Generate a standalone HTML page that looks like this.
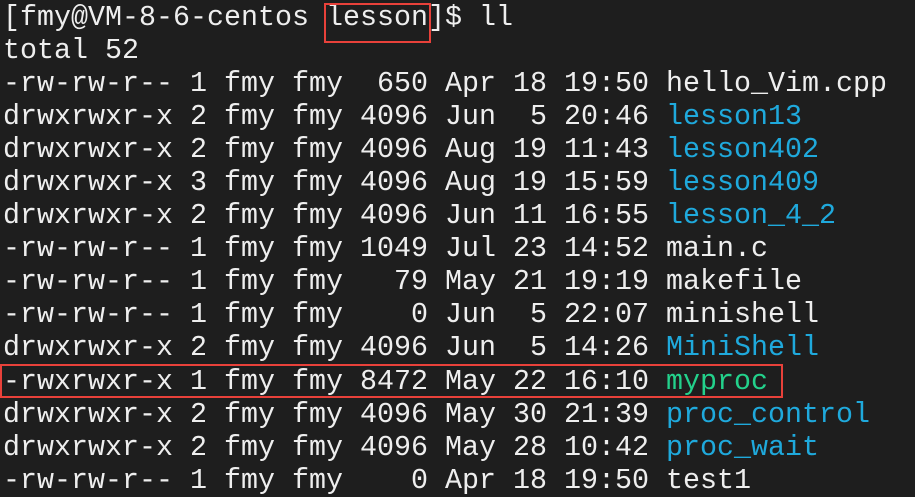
<!DOCTYPE html>
<html><head><meta charset="utf-8"><style>
html,body{margin:0;padding:0;background:#1e1e1e;width:915px;height:497px;overflow:hidden}
pre{margin:0;position:absolute;left:3px;top:1px;font-family:"Liberation Mono","DejaVu Sans Mono",monospace;font-size:28.33px;line-height:33.05px;color:#eeeeee}
.b{color:#1fa9dc}.g{color:#23d18b}
.box{position:absolute;border:2px solid #e8413a;box-sizing:border-box}
</style></head><body>
<pre>[fmy@VM-8-6-centos lesson]$ ll
total 52
-rw-rw-r-- 1 fmy fmy  650 Apr 18 19:50 hello_Vim.cpp
drwxrwxr-x 2 fmy fmy 4096 Jun  5 20:46 <span class="b">lesson13</span>
drwxrwxr-x 2 fmy fmy 4096 Aug 19 11:43 <span class="b">lesson402</span>
drwxrwxr-x 3 fmy fmy 4096 Aug 19 15:59 <span class="b">lesson409</span>
drwxrwxr-x 2 fmy fmy 4096 Jun 11 16:55 <span class="b">lesson_4_2</span>
-rw-rw-r-- 1 fmy fmy 1049 Jul 23 14:52 main.c
-rw-rw-r-- 1 fmy fmy   79 May 21 19:19 makefile
-rw-rw-r-- 1 fmy fmy    0 Jun  5 22:07 minishell
drwxrwxr-x 2 fmy fmy 4096 Jun  5 14:26 <span class="b">MiniShell</span>
-rwxrwxr-x 1 fmy fmy 8472 May 22 16:10 <span class="g">myproc</span>
drwxrwxr-x 2 fmy fmy 4096 May 30 21:39 <span class="b">proc_control</span>
drwxrwxr-x 2 fmy fmy 4096 May 28 10:42 <span class="b">proc_wait</span>
-rw-rw-r-- 1 fmy fmy    0 Apr 18 19:50 test1</pre>
<div class="box" style="left:324px;top:3px;width:107px;height:40px"></div>
<div class="box" style="left:0px;top:364px;width:783px;height:34px"></div>
</body></html>
